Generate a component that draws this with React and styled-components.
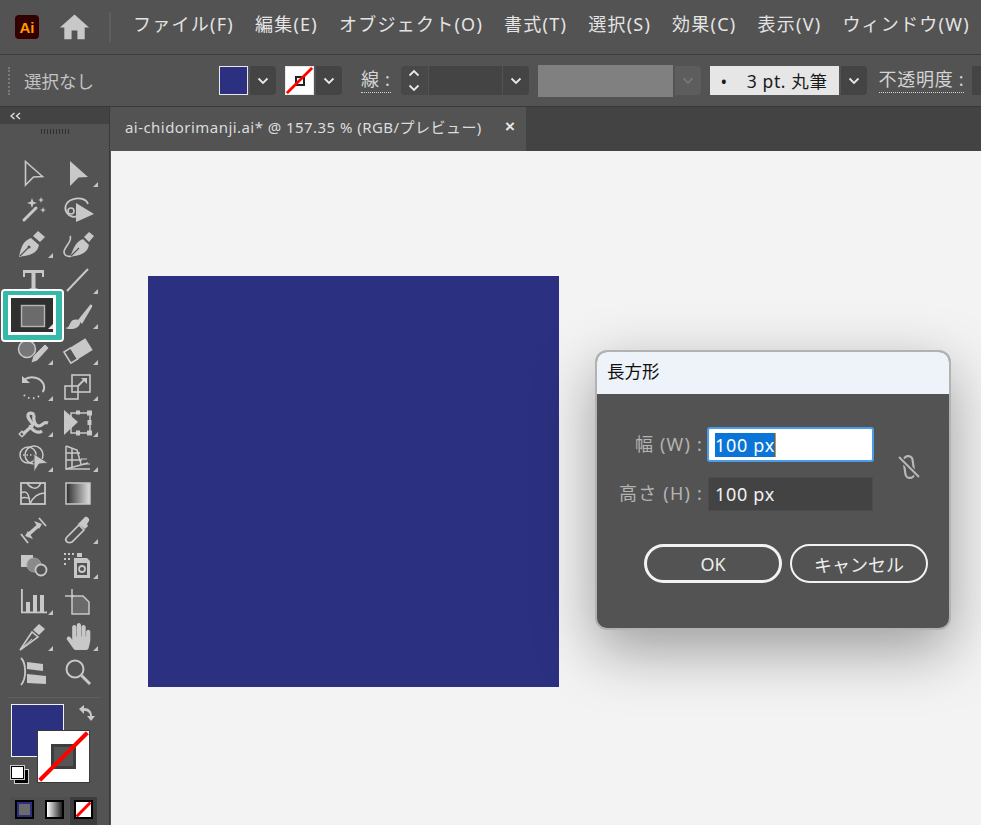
import React from 'react';
import styled, { createGlobalStyle } from 'styled-components';
import { MdHome } from 'react-icons/md';
import { FaHandPaper } from 'react-icons/fa';

const FONT = '"Noto Sans", "Noto Sans CJK JP", sans-serif';
const ICON = '#c8c8c8';

const Global = createGlobalStyle`
  html, body { margin: 0; padding: 0; background: #535353; }
  body { font-family: ${FONT}; }
`;

const Chevron = ({ up, color = '#e8e8e8' }) => (
  <svg width="12" height="8" viewBox="0 0 12 8">
    <polyline points={up ? '1.5,6.5 6,2 10.5,6.5' : '1.5,1.5 6,6 10.5,1.5'} fill="none" stroke={color} strokeWidth="1.8" />
  </svg>
);

const Slash = ({ width = 3 }) => (
  <SlashSvg viewBox="0 0 30 30" preserveAspectRatio="none">
    <line x1="1" y1="29" x2="29" y2="1" stroke="#f00" strokeWidth={width} />
  </SlashSvg>
);

const TOOL_ICONS = {
  select: <path d="M7.5 3.5 24.5 18.5 15.5 19 7.5 27z" fill="none" stroke={ICON} strokeWidth="1.6" />,
  direct: <path d="M7 3 25 19 15.5 19.5 7 28z" fill={ICON} />,
  wand: (
    <g fill={ICON}>
      <line x1="6" y1="26" x2="18" y2="14" stroke={ICON} strokeWidth="3" strokeLinecap="round" />
      <path d="M14 4l1.3 3.7L19 9l-3.7 1.3L14 14l-1.3-3.7L9 9l3.7-1.3z" />
      <path d="M23 3l.8 2.2L26 6l-2.2.8L23 9l-.8-2.2L20 6l2.2-.8z" />
      <path d="M25 13l.8 2.2L28 16l-2.2.8L25 19l-.8-2.2L22 16l2.2-.8z" />
    </g>
  ),
  lasso: (
    <g>
      <path d="M25 10C23 4 14 3 8 6 2 9 1 15 4 19c2 3 7 5 10 3" fill="none" stroke={ICON} strokeWidth="1.8" />
      <circle cx="8" cy="17" r="3" fill="none" stroke={ICON} strokeWidth="1.6" />
      <path d="M13 9 31 20 13 28z" fill={ICON} />
    </g>
  ),
  pen: (
    <g fill={ICON}>
      <path d="M1 28C3 18 5 12 13 9l8 7c-2 9-9 10-20 12z" />
      <path d="M15 7 20 2l7 6-5 5z" />
      <line x1="2" y1="27" x2="10" y2="19" stroke="#535353" strokeWidth="1.2" />
      <circle cx="11" cy="18" r="1.6" fill="#535353" />
    </g>
  ),
  curvature: (
    <g>
      <path d="M7 28C11 19 12 13 20 10l6 6c-2 9-9 10-19 12z" fill={ICON} />
      <path d="M21 8l5-5 5 4-5 6z" fill={ICON} />
      <path d="M7 7C10 12 1 18 1 23c0 4 5 5 7 4" fill="none" stroke={ICON} strokeWidth="1.6" />
      <line x1="8" y1="27" x2="16" y2="19" stroke="#535353" strokeWidth="1.2" />
    </g>
  ),
  type: <path d="M5 5h21v7h-2V8h-6.500v15l3 1v2H10.500v-2l3-1V8H7v4H5z" fill={ICON} />,
  line: <line x1="4" y1="26" x2="25" y2="4" stroke={ICON} strokeWidth="2" />,
  rect: <rect x="3.500" y="4.500" width="23" height="21" fill="#6b6b6b" stroke="#b5b5b5" strokeWidth="1.400" />,
  brush: (
    <g fill={ICON}>
      <path d="M15 19 27 4c1-1 3 0 2 2L19 23z" />
      <path d="M2 27c4 0 4-3 6-6 2-3 6-3 9-1 1 4-3 8-8 8-3 0-5 0-7-1z" />
    </g>
  ),
  shaper: (
    <g>
      <circle cx="9" cy="13" r="8.500" fill="#777" stroke={ICON} strokeWidth="1.500" />
      <path d="M13 27l2-7L27 8l4 4-12 13z" fill={ICON} stroke="#535353" strokeWidth=".8" />
    </g>
  ),
  eraser: (
    <g transform="rotate(-32 15 15)">
      <rect x="10" y="8" width="18" height="14" fill={ICON} />
      <rect x="2.500" y="8.500" width="8" height="13" fill="none" stroke={ICON} strokeWidth="1.600" />
    </g>
  ),
  rotate: (
    <g fill="none" stroke={ICON}>
      <path d="M6 8C12 3 24 5 26 14c.5 3-.5 5-1.500 6" strokeWidth="2" />
      <path d="M4 4v7h8z" fill={ICON} stroke="none" />
      <path d="M21 24c-4 3-10 3-14 0-1-1-2-2-3-4" strokeWidth="2" strokeDasharray="1.500 3.500" />
    </g>
  ),
  scale: (
    <g fill="none" stroke={ICON} strokeWidth="1.600">
      <rect x="2" y="14" width="13" height="13" />
      <rect x="9" y="3" width="18" height="17" />
      <path d="M15 14l7-7" strokeWidth="1.800" />
      <path d="M18 6h6v6z" fill={ICON} stroke="none" />
    </g>
  ),
  puppet: (
    <g fill="none" stroke={ICON} strokeWidth="3.200">
      <path d="M5 26 14 18c3-3-5-6-4-11 1-3 5-2 6 0" />
      <path d="M16 7c-1 6 1 11 5 11 4 0 4-5 9-3" />
      <path d="M12 17c2 6 8 9 12 6" />
      <rect x="2" y="24" width="4" height="4" strokeWidth="1.400" transform="rotate(45 4 26)" />
    </g>
  ),
  free: (
    <g>
      <rect x="8" y="5" width="19" height="20" fill="none" stroke={ICON} strokeWidth="1.500" />
      <path d="M1 2 15 14 1 27z" fill={ICON} />
      <g fill={ICON}>
        <rect x="24" y="2.500" width="5" height="5" />
        <rect x="24" y="22.500" width="5" height="5" />
        <rect x="13" y="22.500" width="4" height="5" />
        <rect x="13" y="2.500" width="4" height="4" />
        <rect x="24.500" y="12" width="4" height="5" />
      </g>
    </g>
  ),
  builder: (
    <g>
      <circle cx="10" cy="12" r="8" fill="none" stroke={ICON} strokeWidth="1.500" />
      <circle cx="16" cy="12" r="9" fill="none" stroke={ICON} strokeWidth="1.500" />
      <line x1="5" y1="12" x2="16" y2="12" stroke={ICON} strokeWidth="1.600" strokeDasharray="1.500 2" />
      <path d="M16 11 30 20 21 21l-5 8z" fill={ICON} stroke="#535353" strokeWidth=".8" />
    </g>
  ),
  perspective: (
    <g fill="none" stroke={ICON} strokeWidth="1.500">
      <path d="M3 3v23h24" />
      <path d="M3 3 14 7 18 21M3 26 25 20" />
      <path d="M3 10h14M3 17h16M9 5v19" />
      <path d="M18 16h6M20 21h7" opacity=".7" />
    </g>
  ),
  mesh: (
    <g fill="none" stroke={ICON} strokeWidth="1.500">
      <rect x="3" y="4" width="24" height="21" strokeWidth="1.800" />
      <path d="M3 14c6-3 8 1 9 11M12 25c3-7 8-11 15-11M9 4c3 5 9 7 12 3l2-3M3 19c4-1 6-1 9 1" />
    </g>
  ),
  gradient: (
    <g>
      <rect x="3" y="4" width="24" height="21" fill="url(#toolGradient)" stroke={ICON} strokeWidth="1.500" />
    </g>
  ),
  width: (
    <g stroke={ICON} fill="none">
      <line x1="3" y1="19" x2="10" y2="28" strokeWidth="1.800" />
      <line x1="21" y1="3" x2="28" y2="11" strokeWidth="1.800" />
      <line x1="11" y1="19" x2="20" y2="11" strokeWidth="3.500" />
      <path d="M7 21l8 3-5-8zM24 9l-8-3 5 8z" fill={ICON} stroke="none" />
    </g>
  ),
  dropper: (
    <g fill="none" stroke={ICON}>
      <path d="M4 27c-2-2-1-4 0-5L16 10l5 5L9 27c-2 1-3 1-5 0z" strokeWidth="1.700" />
      <path d="M15 9l7-7c2-1 5 2 4 4l-2 3 1 2-3 3-8-6z" fill={ICON} stroke="none" />
    </g>
  ),
  blend: (
    <g>
      <rect x="3" y="5" width="12" height="12" fill={ICON} />
      <circle cx="16" cy="15" r="7" fill="#8a8a8a" stroke="#9a9a9a" />
      <circle cx="23" cy="20" r="5.500" fill="#535353" stroke={ICON} strokeWidth="1.800" />
    </g>
  ),
  symbol: (
    <g fill={ICON}>
      <rect x="14" y="3" width="5" height="4" />
      <path d="M11 8h13l3 3v17H11zm3 5v12h10V13z" fillRule="evenodd" />
      <circle cx="19" cy="19" r="3" fill="none" stroke={ICON} strokeWidth="1.800" />
      {[[1, 3], [5, 3], [9, 3], [1, 8], [5, 8], [1, 13]].map(([x, y]) => (
        <rect key={`${x}-${y}`} x={x} y={y} width="2" height="2" />
      ))}
    </g>
  ),
  chart: (
    <g fill={ICON}>
      <rect x="3" y="3" width="1.800" height="24" />
      <rect x="3" y="25.500" width="26" height="1.800" />
      <rect x="8" y="16" width="4" height="10" />
      <rect x="15" y="9" width="4" height="17" />
      <rect x="22" y="9" width="4" height="17" />
    </g>
  ),
  artboard: (
    <g>
      <path d="M9 10h11l6 6v12H9z" fill="#6a6a6a" stroke={ICON} strokeWidth="1.500" />
      <path d="M2 10h9M9 3v9" stroke={ICON} strokeWidth="1.500" />
    </g>
  ),
  slice: (
    <g>
      <path d="M2 28 14 10l6 5z" fill="none" stroke={ICON} strokeWidth="1.600" />
      <path d="M15 8l6-6 6 5-6 6z" fill={ICON} />
      <line x1="3" y1="27" x2="14" y2="17" stroke={ICON} strokeWidth="1" />
    </g>
  ),
  zoom: (
    <g fill="none" stroke={ICON}>
      <circle cx="12" cy="12" r="8.500" strokeWidth="2" />
      <line x1="18.500" y1="18.500" x2="27" y2="27" strokeWidth="3" />
    </g>
  ),
  tiling: (
    <g fill={ICON}>
      <path d="M3 1c5 5 6 20 0 27" fill="none" stroke={ICON} strokeWidth="1.800" />
      <path d="M9 5l16 2v7L9 12z" />
      <path d="M9 17l19 2v8L9 26z" />
    </g>
  ),
};

const Icon = ({ name }) => {
  if (name === 'hand') return <FaHandPaper size={27} color={ICON} />;
  return (
    <ToolSvg viewBox="0 0 30 30">
      <defs>
        <linearGradient id="toolGradient" x1="0" x2="1">
          <stop offset="0" stopColor="#2c2c2c" />
          <stop offset="1" stopColor="#e0e0e0" />
        </linearGradient>
      </defs>
      {TOOL_ICONS[name]}
    </ToolSvg>
  );
};

// name, has flyout corner
const TOOLS = [
  ['select', false], ['direct', true],
  ['wand', false], ['lasso', false],
  ['pen', true], ['curvature', false],
  ['type', false], ['line', true],
  ['rect', true], ['brush', true],
  ['shaper', true], ['eraser', true],
  ['rotate', true], ['scale', true],
  ['puppet', true], ['free', true],
  ['builder', true], ['perspective', true],
  ['mesh', false], ['gradient', false],
  ['width', false], ['dropper', true],
  ['blend', false], ['symbol', true],
  ['chart', true], ['artboard', false],
  ['slice', true], ['hand', true],
  ['tiling', false], ['zoom', false],
];

const MENUS = ['ファイル(F)', '編集(E)', 'オブジェクト(O)', '書式(T)', '選択(S)', '効果(C)', '表示(V)', 'ウィンドウ(W)'];

const App = () => (
  <Page>
    <Global />
    <MenuBar>
      <AppLogo>Ai</AppLogo>
      <MdHome size={35} color={ICON} />
      <MenuDivider />
      <MenuList>
        {MENUS.map((m) => <MenuItem key={m}>{m}</MenuItem>)}
      </MenuList>
    </MenuBar>

    <ControlBar>
      <Grip />
      <Status>選択なし</Status>
      <Swatch $bg="#2b3080" />
      <DropBtn><Chevron /></DropBtn>
      <Swatch $bg="#fff" $gap="9px">
        <TinySquare />
        <Slash />
      </Swatch>
      <DropBtn><Chevron /></DropBtn>
      <DottedLabel $left="19px">線 :</DottedLabel>
      <Spinner>
        <Chevron up />
        <Chevron />
      </Spinner>
      <StrokeField />
      <DropBtn $gap="1px"><Chevron /></DropBtn>
      <DisabledField />
      <DropBtn $muted><Chevron color="#757575" /></DropBtn>
      <BrushBox>
        <span>•</span>
        <span>3 pt. 丸筆</span>
      </BrushBox>
      <DropBtn><Chevron /></DropBtn>
      <DottedLabel $left="12px">不透明度 :</DottedLabel>
      <OpacityStub />
    </ControlBar>

    <Workspace>
      <ToolPanel>
        <PanelHeader>
          <svg width="11" height="8" viewBox="0 0 11 8" fill="none" stroke="#dcdcdc" strokeWidth="1.400">
            <polyline points="4.500,1 1,4 4.500,7" />
            <polyline points="10,1 6.500,4 10,7" />
          </svg>
        </PanelHeader>
        <PanelGrip />
        <ToolGrid>
          {TOOLS.map(([name, corner]) => (
            <ToolCell key={name} $selected={name === 'rect'}>
              {name === 'rect' && <SelectedRing />}
              <IconLayer><Icon name={name} /></IconLayer>
              {corner && <Corner $light={name === 'rect'} />}
            </ToolCell>
          ))}
        </ToolGrid>
        <PanelRule />
        <ColorArea>
          <FillBox />
          <SwapIcon viewBox="0 0 18 18">
            <path d="M2 5 7 1v3c5 0 8 3 8 8h3l-4 5-4-5h3c0-3-2-5-6-5v3z" fill={ICON} />
          </SwapIcon>
          <StrokeBox>
            <StrokeHole />
            <Slash width={2.400} />
          </StrokeBox>
          <DefaultBox>
            <DefaultBack />
            <DefaultFront />
          </DefaultBox>
        </ColorArea>
        <ModeRow>
          <Mode $w="28px"><ModeSwatch $fill="#6b6b6b" $edge="#2b3080" /></Mode>
          <Mode $w="30px"><ModeSwatch $fill="linear-gradient(90deg, #fff, #222)" /></Mode>
          <Mode $w="27px" $active><ModeSwatch $fill="#fff"><Slash width={6} /></ModeSwatch></Mode>
        </ModeRow>
      </ToolPanel>

      <DocArea>
        <TabBar>
          <Tab>
            <TabTitle>ai-chidorimanji.ai* @ 157.35 % (RGB/プレビュー)</TabTitle>
            <TabClose>×</TabClose>
          </Tab>
        </TabBar>
        <Canvas>
          <Artboard />
          <Dialog>
            <DialogTitle>長方形</DialogTitle>
            <DialogBody>
              <FormGrid>
                <FieldLabel>幅 (W) :</FieldLabel>
                <Field $focused><Selected>100 px</Selected></Field>
                <LinkCell>
                  <svg width="26" height="28" viewBox="0 0 26 28" fill="none" stroke="#b8b8b8">
                    <rect x="8.500" y="3" width="9" height="22" rx="4.500" strokeWidth="2.200" transform="rotate(-8 13 14)" />
                    <line x1="3" y1="4" x2="23" y2="24" stroke="#535353" strokeWidth="5" />
                    <line x1="3" y1="4" x2="23" y2="24" strokeWidth="2" />
                  </svg>
                </LinkCell>
                <FieldLabel>高さ (H) :</FieldLabel>
                <Field>100 px</Field>
              </FormGrid>
              <ButtonRow>
                <DialogButton $primary>OK</DialogButton>
                <DialogButton>キャンセル</DialogButton>
              </ButtonRow>
            </DialogBody>
          </Dialog>
        </Canvas>
      </DocArea>
    </Workspace>
  </Page>
);

const Page = styled.div`
  position: relative;
  display: flex;
  flex-direction: column;
  width: 981px;
  height: 825px;
  overflow: hidden;
  background: #535353;
  font-family: ${FONT};
`;

const MenuBar = styled.header`
  display: flex;
  align-items: center;
  flex: none;
  height: 54px;
  padding-left: 15px;
  border-bottom: 1px solid #3d3d3d;
  white-space: nowrap;
  > svg { margin-left: 18px; }
`;
const AppLogo = styled.div`
  display: flex;
  align-items: center;
  justify-content: center;
  flex: none;
  width: 24px;
  height: 24px;
  border-radius: 4px;
  background: #330000;
  color: #ff9a00;
  font: 700 15px "Liberation Sans", sans-serif;
`;
const MenuDivider = styled.div`
  flex: none;
  width: 2px;
  height: 30px;
  margin: 0 22px 0 17px;
  background: #5e5e5e;
`;
const MenuList = styled.nav`
  display: flex;
  flex: none;
  gap: 21px;
  padding-bottom: 7px;
`;
const MenuItem = styled.span`
  color: #e4e4e4;
  font-size: 18px;
  line-height: 24px;
  letter-spacing: 1.250px;
`;

const ControlBar = styled.div`
  display: flex;
  align-items: center;
  flex: none;
  height: 51px;
  padding-left: 8px;
  border-bottom: 1px solid #383838;
  white-space: nowrap;
`;
const Grip = styled.div`
  flex: none;
  width: 2px;
  height: 28px;
  border-left: 2px dotted #7a7a7a;
`;
const Status = styled.span`
  flex: none;
  width: 195px;
  margin-left: 12px;
  color: #c2c2c2;
  font-size: 17.500px;
`;
const Swatch = styled.div`
  position: relative;
  display: flex;
  align-items: center;
  justify-content: center;
  flex: none;
  width: 29px;
  height: 29px;
  margin-left: ${(p) => p.$gap || 0};
  box-sizing: border-box;
  border: 1px solid #e8e8e8;
  background: ${(p) => p.$bg};
`;
const TinySquare = styled.div`
  width: 10px;
  height: 10px;
  box-sizing: border-box;
  border: 2px solid #222;
`;
const SlashSvg = styled.svg`
  position: absolute;
  inset: 0;
  width: 100%;
  height: 100%;
`;
const DropBtn = styled.div`
  display: flex;
  align-items: center;
  justify-content: center;
  flex: none;
  width: 26px;
  height: 29px;
  margin-left: ${(p) => p.$gap || '2px'};
  border-radius: 0 4px 4px 0;
  background: ${(p) => (p.$muted ? '#5d5d5d' : '#444')};
`;
const DottedLabel = styled.span`
  flex: none;
  margin-left: ${(p) => p.$left};
  padding-bottom: 1px;
  border-bottom: 1px dotted #d0d0d0;
  color: #d4d4d4;
  font-size: 18px;
  line-height: 23px;
  letter-spacing: 0.7px;
`;
const Spinner = styled.div`
  display: flex;
  flex-direction: column;
  align-items: center;
  justify-content: center;
  flex: none;
  gap: 7px;
  width: 27px;
  height: 29px;
  margin-left: 10px;
  border-radius: 4px 0 0 4px;
  background: #484848;
`;
const StrokeField = styled.div`
  flex: none;
  width: 73px;
  height: 29px;
  margin-left: 1px;
  background: #444;
`;
const DisabledField = styled.div`
  flex: none;
  width: 135px;
  height: 32px;
  margin-left: 9px;
  background: #808080;
`;
const BrushBox = styled.div`
  display: flex;
  align-items: center;
  flex: none;
  gap: 19px;
  width: 129px;
  height: 29px;
  margin-left: 9px;
  padding-left: 11px;
  box-sizing: border-box;
  background: #e6e6e6;
  color: #1a1a1a;
  font-size: 17.500px;
  letter-spacing: 0.6px;
`;
const OpacityStub = styled.div`
  flex: none;
  width: 20px;
  height: 29px;
  margin-left: 8px;
  background: #444;
`;

const Workspace = styled.div`
  display: flex;
  flex: 1;
  min-height: 0;
`;
const ToolPanel = styled.aside`
  display: flex;
  flex-direction: column;
  flex: none;
  width: 109px;
  margin-right: 2px;
  background: #535353;
  box-shadow: 1px 0 0 #3a3a3a;
`;
const PanelHeader = styled.div`
  display: flex;
  align-items: center;
  flex: none;
  height: 17px;
  padding-left: 10px;
  box-sizing: border-box;
  background: #434343;
`;
const PanelGrip = styled.div`
  flex: none;
  width: 28px;
  height: 5px;
  margin: 5px auto 21px;
  background: repeating-linear-gradient(90deg, #2f2f2f 0 1px, transparent 1px 3px);
`;
const ToolGrid = styled.div`
  display: grid;
  flex: none;
  grid-template-columns: 45px 45px;
  grid-auto-rows: 35.700px;
  padding-left: 10.500px;
`;
const ToolCell = styled.div`
  position: relative;
  z-index: ${(p) => (p.$selected ? 2 : 'auto')};
  display: flex;
  align-items: center;
  justify-content: center;
`;
const IconLayer = styled.div`
  position: relative;
  display: flex;
  align-items: center;
  justify-content: center;
  width: 30px;
  height: 30px;
`;
const ToolSvg = styled.svg`
  width: 30px;
  height: 30px;
  overflow: visible;
`;
const Corner = styled.i`
  position: absolute;
  right: 3px;
  bottom: 4px;
  width: 0;
  height: 0;
  border-left: 5px solid transparent;
  border-bottom: 5px solid ${(p) => (p.$light ? '#e8e8e8' : '#c4c4c4')};
`;
const SelectedRing = styled.div`
  position: absolute;
  left: -7.500px;
  top: -7px;
  width: 59px;
  height: 49px;
  box-sizing: border-box;
  border: solid #35b9a9;
  border-width: 4px 6px 5px 5px;
  outline: 2.500px solid #fff;
  border-radius: 2px;
  background: #2f2f2f;
  box-shadow: inset 0 0 0 3px #fff;
`;
const PanelRule = styled.div`
  flex: none;
  height: 1px;
  margin: 7px 8px 6px 8px;
  background: #5f5f5f;
`;
const ColorArea = styled.div`
  position: relative;
  flex: none;
  height: 93px;
`;
const FillBox = styled.div`
  position: absolute;
  left: 11px;
  top: 0;
  width: 53px;
  height: 53px;
  box-sizing: border-box;
  border: 1px solid #f2f2f2;
  background: #2b3080;
`;
const SwapIcon = styled.svg`
  position: absolute;
  left: 77px;
  top: 0;
  width: 18px;
  height: 18px;
`;
const StrokeBox = styled.div`
  position: absolute;
  left: 37px;
  top: 26px;
  display: flex;
  align-items: center;
  justify-content: center;
  width: 53px;
  height: 53px;
  box-sizing: border-box;
  border: 1px solid #3a3a3a;
  background: #fff;
`;
const StrokeHole = styled.div`
  width: 25px;
  height: 25px;
  box-sizing: border-box;
  border: 3px solid #3d3d3d;
  background: #555;
`;
const DefaultBox = styled.div`
  position: absolute;
  left: 10px;
  top: 61px;
  width: 19px;
  height: 19px;
`;
const DefaultBack = styled.div`
  position: absolute;
  right: 1px;
  bottom: 1px;
  width: 13px;
  height: 13px;
  box-sizing: border-box;
  border: 3px solid #000;
  outline: 1px solid #ccc;
`;
const DefaultFront = styled.div`
  position: absolute;
  left: 1px;
  top: 1px;
  width: 11px;
  height: 11px;
  background: #fff;
  border: 1px solid #000;
  outline: 1px solid #ccc;
`;
const ModeRow = styled.div`
  display: flex;
  flex: 1;
  margin-left: 10px;
`;
const Mode = styled.div`
  display: flex;
  justify-content: center;
  width: ${(p) => p.$w};
  padding-top: 3px;
  margin-right: 1px;
  background: ${(p) => (p.$active ? '#3c3c3c' : '#4f4f4f')};
`;
const ModeSwatch = styled.div`
  position: relative;
  width: 19px;
  height: 19px;
  box-sizing: border-box;
  border: 2px solid #000;
  background: ${(p) => p.$fill};
  box-shadow: ${(p) => (p.$edge ? `inset 0 0 0 2px ${p.$edge}` : 'none')};
`;

const DocArea = styled.main`
  display: flex;
  flex-direction: column;
  flex: 1;
  min-width: 0;
`;
const TabBar = styled.div`
  display: flex;
  flex: none;
  height: 44px;
  background: #434343;
`;
const Tab = styled.div`
  display: flex;
  align-items: center;
  justify-content: space-between;
  width: 415px;
  padding: 0 11px 5px 14px;
  box-sizing: border-box;
  background: #535353;
  white-space: nowrap;
`;
const TabTitle = styled.span`
  color: #dcdcdc;
  font-size: 15px;
  letter-spacing: 0.45px;
`;
const TabClose = styled.span`
  color: #e8e8e8;
  font: 700 17px "Liberation Sans", sans-serif;
`;
const Canvas = styled.div`
  position: relative;
  flex: 1;
  padding: 125px 0 0 37px;
  background: #f3f3f3;
`;
const Artboard = styled.div`
  width: 411px;
  height: 411px;
  background: #2b3080;
`;
const Dialog = styled.section`
  position: absolute;
  left: 484px;
  top: 199px;
  display: flex;
  flex-direction: column;
  width: 356px;
  height: 280px;
  box-sizing: border-box;
  overflow: hidden;
  border: 2px solid #b2b2b2;
  border-radius: 12px;
  background: #535353;
  box-shadow: 0 20px 60px rgba(0, 0, 0, 0.36);
`;
const DialogTitle = styled.div`
  display: flex;
  align-items: center;
  flex: none;
  height: 42px;
  padding: 0 0 6px 10px;
  box-sizing: border-box;
  background: #eef3fa;
  color: #111;
  font-size: 17.500px;
`;
const DialogBody = styled.div`
  display: flex;
  flex-direction: column;
  flex: 1;
  padding-top: 34px;
`;
const FormGrid = styled.div`
  display: grid;
  grid-template-columns: 109px 165px 1fr;
  grid-template-rows: 33px 34px;
  row-gap: 16px;
  column-gap: 2px;
  align-items: center;
`;
const FieldLabel = styled.label`
  justify-self: end;
  padding: 0 3px 4px 0;
  color: #b4b4b4;
  font-size: 18px;
  letter-spacing: 1.200px;
  white-space: nowrap;
`;
const Field = styled.div`
  display: flex;
  align-items: center;
  height: 100%;
  padding-left: 6px;
  box-sizing: border-box;
  border: 1px solid ${(p) => (p.$focused ? '#4b9ce8' : '#4c4c4c')};
  border-radius: 2px;
  background: ${(p) => (p.$focused ? '#fff' : '#434343')};
  box-shadow: ${(p) => (p.$focused ? '0 0 0 1px #4b9ce8' : 'none')};
  color: #f2f2f2;
  font-size: 18px;
  letter-spacing: 0.7px;
  line-height: 24px;
`;
const Selected = styled.span`
  height: 24px;
  background: #0a74d8;
  border-right: 1px solid #ff8a00;
  color: #fff;
`;
const LinkCell = styled.div`
  grid-column: 3;
  grid-row: 1 / span 2;
  padding-left: 21px;
`;
const ButtonRow = styled.div`
  display: flex;
  gap: 8px;
  margin: 33px 0 0 47px;
`;
const DialogButton = styled.button`
  width: 138px;
  height: 39px;
  padding: 0;
  box-sizing: border-box;
  border: ${(p) => (p.$primary ? '3px' : '2px')} solid #f2f2f2;
  border-radius: 20px;
  background: transparent;
  color: #ececec;
  font-family: ${FONT};
  font-size: 18px;
`;

export default App;
